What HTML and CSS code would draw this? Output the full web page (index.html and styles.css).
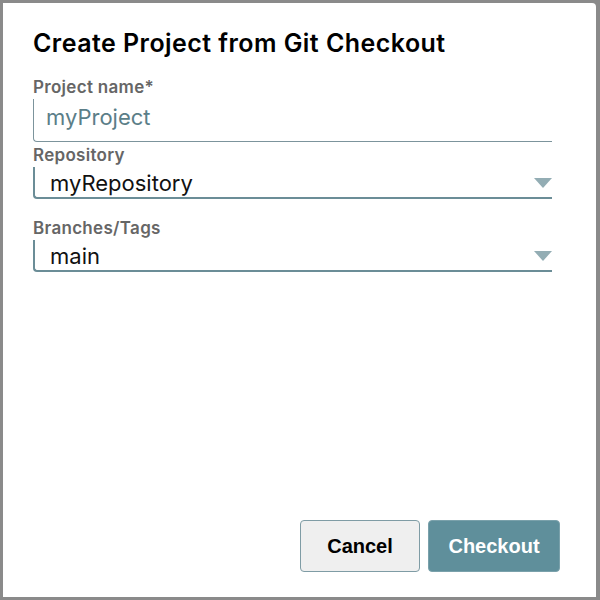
FILE: index.html
```html
<!DOCTYPE html>
<html>
<head>
<meta charset="utf-8">
<link rel="stylesheet" href="styles.css">
</head>
<body>
<div class="dialog">
  <h1 class="title">Create Project from Git Checkout</h1>
  <div class="field">
    <label class="label">Project name*</label>
    <div class="input">myProject</div>
  </div>
  <div class="field tight">
    <label class="label">Repository</label>
    <div class="select"><span>myRepository</span><span class="caret"></span></div>
  </div>
  <div class="field">
    <label class="label">Branches/Tags</label>
    <div class="select"><span>main</span><span class="caret"></span></div>
  </div>
  <div class="actions">
    <button class="btn cancel">Cancel</button>
    <button class="btn primary">Checkout</button>
  </div>
</div>
</body>
</html>
```
FILE: styles.css
```css
html, body { margin: 0; padding: 0; }
body {
  background: #8a8a8a;
  width: 600px;
  height: 600px;
  padding: 3px 4px 3px 3px;
  box-sizing: border-box;
  font-family: Inter, "Noto Sans", sans-serif;
}
.dialog {
  background: #fff;
  height: 594px;
  border-radius: 0 4px 0 0;
  box-sizing: border-box;
  padding: 25px 44px 25px 30px;
  display: flex;
  flex-direction: column;
}
.title {
  margin: 0;
  font-size: 25px;
  line-height: 30px;
  font-weight: 600;
  color: #000;
  letter-spacing: 0.45px;
}
.field { display: flex; flex-direction: column; margin-top: 19px; }
.field.tight { margin-top: 3px; }
.label {
  font-size: 17px;
  line-height: 20px;
  font-weight: 600;
  color: #666;
  letter-spacing: 0.3px;
}
.input {
  margin-top: 2px;
  height: 43px;
  box-sizing: border-box;
  border-left: 1px solid #7c949c;
  border-bottom: 1px solid #7c949c;
  border-bottom-left-radius: 4px;
  padding-left: 12px;
  font-size: 22px;
  line-height: 36px;
  color: #5b7e88;
}
.select {
  margin-top: 2px;
  height: 32px;
  box-sizing: border-box;
  border-left: 2px solid #6b8d97;
  border-bottom: 2px solid #6b8d97;
  border-bottom-left-radius: 4px;
  padding-left: 15px;
  font-size: 22px;
  line-height: 32px;
  color: #111;
  display: flex;
  justify-content: space-between;
  align-items: flex-start;
}
.caret {
  width: 0; height: 0;
  margin-top: 11px;
  border-left: 9px solid transparent;
  border-right: 9px solid transparent;
  border-top: 10px solid #93adb4;
}
.actions {
  margin-top: auto;
  margin-right: -8px;
  display: flex;
  justify-content: flex-end;
  gap: 8px;
}
.btn {
  height: 52px;
  border-radius: 4px;
  font-family: "Liberation Sans", Arial, sans-serif;
  font-weight: 700;
  font-size: 20px;
  padding: 0;
}
.cancel {
  width: 120px;
  background: #efefef;
  border: 1px solid #7f9ca5;
  color: #000;
}
.primary {
  width: 132px;
  background: #5f8f9b;
  border: 1px solid #7aa1ab;
  color: #fff;
}
```
